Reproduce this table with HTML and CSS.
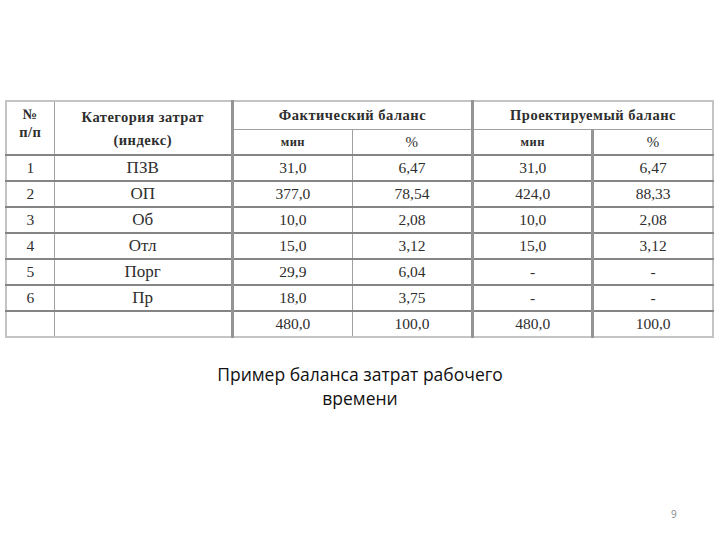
FILE: index.html
```html
<!DOCTYPE html>
<html lang="ru">
<head>
<meta charset="utf-8">
<title>Пример баланса затрат рабочего времени</title>
<link rel="stylesheet" href="styles.css">
</head>
<body>
<div class="slide">
  <table class="balance">
    <colgroup>
      <col class="c-num"><col class="c-cat"><col class="c-v"><col class="c-v"><col class="c-v"><col class="c-v">
    </colgroup>
    <thead>
      <tr class="h1">
        <th rowspan="2" class="num"><span class="nline">№</span><span class="nline">п/п</span></th>
        <th rowspan="2" class="cat">Категория затрат<br>(индекс)</th>
        <th colspan="2" class="grp">Фактический баланс</th>
        <th colspan="2" class="grp grp2">Проектируемый баланс</th>
      </tr>
      <tr class="h2">
        <th class="sub thick">мин</th>
        <th class="sub pct">%</th>
        <th class="sub thick">мин</th>
        <th class="sub thick pct">%</th>
      </tr>
    </thead>
    <tbody>
      <tr><td>1</td><td class="cat">ПЗВ</td><td class="thick">31,0</td><td>6,47</td><td class="thick">31,0</td><td class="thick">6,47</td></tr>
      <tr><td>2</td><td class="cat">ОП</td><td class="thick">377,0</td><td>78,54</td><td class="thick">424,0</td><td class="thick">88,33</td></tr>
      <tr><td>3</td><td class="cat">Об</td><td class="thick">10,0</td><td>2,08</td><td class="thick">10,0</td><td class="thick">2,08</td></tr>
      <tr><td>4</td><td class="cat">Отл</td><td class="thick">15,0</td><td>3,12</td><td class="thick">15,0</td><td class="thick">3,12</td></tr>
      <tr><td>5</td><td class="cat">Порг</td><td class="thick">29,9</td><td>6,04</td><td class="thick">-</td><td class="thick">-</td></tr>
      <tr><td>6</td><td class="cat">Пр</td><td class="thick">18,0</td><td>3,75</td><td class="thick">-</td><td class="thick">-</td></tr>
      <tr><td></td><td class="cat"></td><td class="thick">480,0</td><td>100,0</td><td class="thick">480,0</td><td class="thick">100,0</td></tr>
    </tbody>
  </table>
  <p class="caption">Пример баланса затрат рабочего времени</p>
  <div class="page-num">9</div>
</div>
</body>
</html>
```

FILE: styles.css
```css
html, body {
  margin: 0;
  padding: 0;
  background: #ffffff;
}

.slide {
  position: relative;
  width: 720px;
  height: 540px;
  padding-top: 100px;
  box-sizing: border-box;
}

.balance {
  margin-left: 5px;
  border-collapse: collapse;
  table-layout: fixed;
  width: 709px;
  border: 2px solid #c4c4c4;
  font-family: "Liberation Serif", "Times New Roman", serif;
  color: #2e2e2e;
}

.c-num { width: 48px; }
.c-cat { width: 178px; }
.c-v { width: 120px; }

.balance th,
.balance td {
  padding: 0;
  text-align: center;
  border: 1px solid #a0a0a0;
  border-top: 2px solid #858585;
}

.balance th {
  font-weight: bold;
  font-size: 14.5px;
  letter-spacing: 0.5px;
  line-height: 23px;
}

.balance .h1 th { height: 27px; border-top: none; }
.balance .h1 th.cat { line-height: 23px; vertical-align: top; padding-top: 4px; }
.balance .h1 th.num { vertical-align: top; padding-top: 3px; line-height: 18px; font-size: 14.5px; }
.nline { display: block; }
.balance .h2 th { height: 24px; border-top: 1px solid #959595; }
.balance th.sub { font-size: 12.5px; }
.balance th.pct { font-weight: normal; font-size: 15px; }

.balance td {
  font-size: 15.5px;
  height: 24px;
  line-height: 24px;
}

.balance td.cat { font-size: 17px; }

.balance th.grp,
.balance .thick {
  border-left: 3px solid #959595;
}

.caption {
  width: 310px;
  margin: 24px auto 0;
  text-align: center;
  font-family: "Open Sans", "Noto Sans", sans-serif;
  font-size: 17.5px;
  line-height: 24px;
  color: #111111;
}

.page-num {
  position: absolute;
  left: 671px;
  top: 507px;
  font-family: "Open Sans", sans-serif;
  font-size: 10px;
  color: #8a8a8a;
}
```
